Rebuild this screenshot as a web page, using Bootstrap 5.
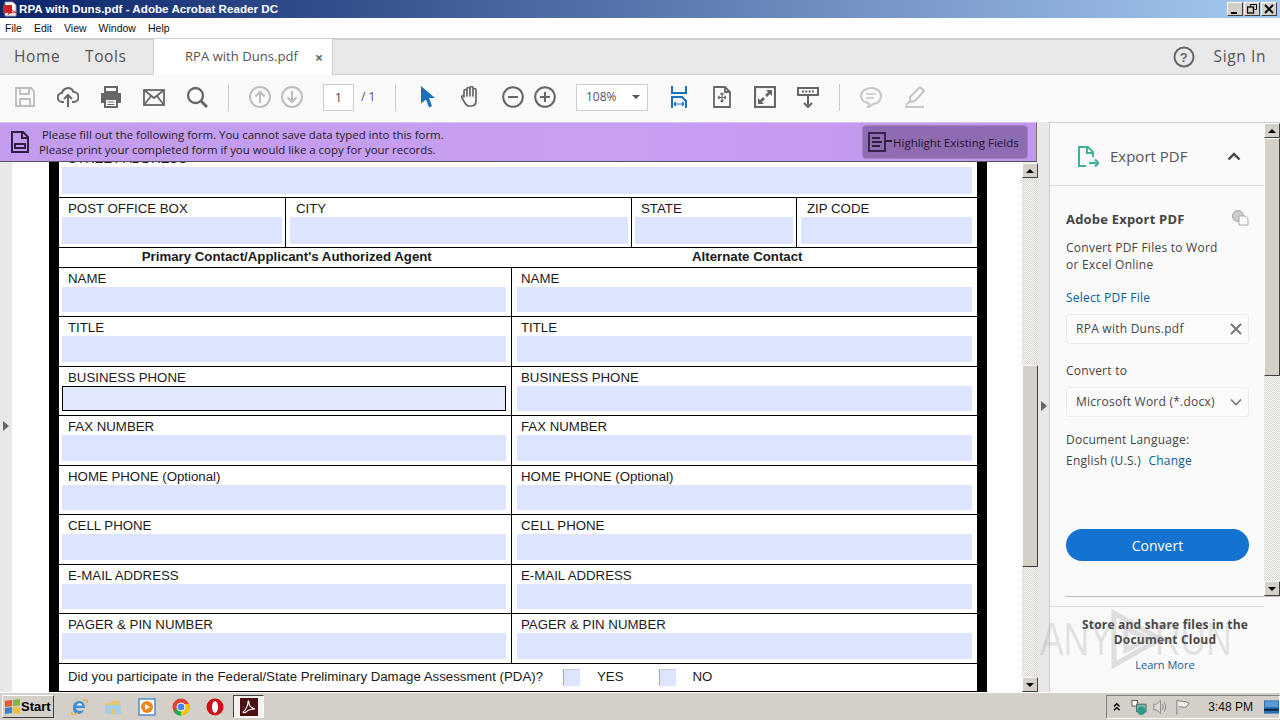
<!DOCTYPE html>
<html lang="en">
<head>
<meta charset="utf-8">
<title>RPA with Duns.pdf - Adobe Acrobat Reader DC</title>
<link href="https://cdn.jsdelivr.net/npm/bootstrap@5.3.0/dist/css/bootstrap.min.css" rel="stylesheet">
<style>
html,body{margin:0;width:1280px;height:720px;overflow:hidden;background:#d4d0c8}
.app{width:1280px;height:720px;font-family:"Open Sans","Noto Sans",sans-serif;position:relative;overflow:hidden}
.titlebar{height:18px;background:linear-gradient(90deg,#0a246a 0%,#a6caf0 100%);color:#fff;font:bold 11.65px/18px "Liberation Sans",sans-serif;padding-left:3px}
.titlebar svg{margin-right:1px}
.winbtn{width:16px;height:14px;background:#d4d0c8;border:1px solid;border-color:#fff #404040 #404040 #fff;margin-right:1px;color:#000}
.winbtns{margin-right:2px;margin-top:2px;gap:0}
.menubar{height:20px;background:#fdfdfd;font:10.5px/20px "Liberation Sans",sans-serif;color:#111;padding-left:5px;gap:12px}
.tabbar{height:37px;background:#e9e9e9;border-top:2px solid #cfcfcf;border-bottom:1px solid #cfcfcf;color:#555;font-size:15.5px;letter-spacing:.6px}
.tabbar .hm{margin-left:14px;width:71px}
.tabbar .tl{width:68px}
.doctab{width:180px;height:36px;background:#fff;border-left:1px solid #cfcfcf;border-right:1px solid #cfcfcf;font-size:13px;letter-spacing:.05px;color:#555;padding-left:31px;padding-right:9px;margin-bottom:-1px;margin-top:-1px}
.doctab b{color:#666;font-size:14px}
.signin{margin-right:14px;margin-left:19px;font-size:15.5px}
.toolbar{height:47px;background:#fafafa;padding-left:14px;padding-bottom:3px;color:#666}
.toolbar svg{width:22px;height:22px;flex:none}
.m10{margin-left:10px}.m20{margin-left:20px}.m21{margin-left:21px}
.tsep{width:1px;height:27px;background:#ccc;flex:none}
.pagebox{width:31px;height:27px;background:#fff;border:1px solid #ccc;font-size:12px;color:#444;line-height:25px;text-align:center}
.pageof{font-size:12px;color:#555;width:18px;margin-left:7px;white-space:nowrap}
.zoombox{width:72px;height:27px;background:#fff;border:1px solid #ccc;font-size:12px;color:#555;padding:0 7px 0 9px}
.caret-d{width:0;height:0;border-left:4px solid transparent;border-right:4px solid transparent;border-top:4px solid #555}
.workarea{height:570px}
.leftcol{width:1038px;flex:none;height:570px;background:#e8e8e8}
.banner{height:40px;width:1037px;background:linear-gradient(90deg,#c49cef,#c79ff3 60%,#c296ee);border-top:1px solid #d9c2ee;border-bottom:1px solid #555;border-right:1px solid #777;color:#222;font-size:11.42px;line-height:15px;padding-left:10px}
.banner .msg{margin-left:9px}
.banner .m1{padding-left:3px}
.hlbtn{width:166px;height:34px;background:#8f6cb2;border-radius:4px;margin-right:8px;margin-left:auto;color:#1d1430;font-size:11.5px;padding-left:5px;white-space:nowrap;border:1px solid #a383c4}
.docrow{height:530px}
.gut-l{width:12px;flex:none;background:#e8e8e8;height:530px;padding-top:259px;padding-left:3px}
.tri-r{width:0;height:0;border-top:5px solid transparent;border-bottom:5px solid transparent;border-left:6px solid #666}
.docview{width:1010px;flex:none;height:530px;background:#fff;overflow:hidden}
.sheet{margin-left:37px;width:938px;border-left:10px solid #000;border-right:10px solid #000;margin-top:-14px;background:#fff;color:#1a1a1a;font:13.25px/16px "Liberation Sans",sans-serif;height:560px}
.frow{border-bottom:1px solid #000;display:flex;height:49.5px}
.frow.r50{height:50px}
.frow.hd{height:19.5px;font-weight:bold;text-align:center;line-height:17px}
.frow.hd div:first-child{width:457px}
.frow.hd div:last-child{width:464px;padding-left:3px}
.fcell{padding-top:3px;border-right:1px solid #000;flex:none}
.fcell:last-child{border-right:0}
.fcell .lb{padding-left:6px;height:16px;margin-left:3px;white-space:nowrap}
.fld{height:25.5px;background:#dde4ff;margin-left:3px}
.r50 .fld{height:27px}
.c1{width:453px}.c1 .fld{margin-right:5px}
.c2{width:465px}.c2 .fld{margin-left:5px;margin-right:5px}.c2 .lb{margin-left:0;padding-left:9px}
.fld.on{border:1px solid #000;background:#e2e8ff}
.lastrow{height:28px;border-bottom:1px solid #000;padding-left:9px;line-height:26px}
.ck{width:17px;height:17px;background:#dde4ff;border-left:1px solid #aaa;border-top:1px solid #ccc;flex:none}
.vscroll{width:16px;flex:none;background-color:#e8e6e1;background-image:repeating-conic-gradient(#d4d0c8 0 25%,#fff 0 50%);background-size:2px 2px;display:flex;flex-direction:column}
.sbtn{height:15px;flex:none;background:#d4d0c8;border:1px solid;border-color:#fff #404040 #404040 #fff;display:flex;align-items:center;justify-content:center}
.up{width:0;height:0;border-left:4px solid transparent;border-right:4px solid transparent;border-bottom:4px solid #000}
.dn{width:0;height:0;border-left:4px solid transparent;border-right:4px solid transparent;border-top:4px solid #000}
.sthumb{background:#d4d0c8;border:1px solid;border-color:#fff #404040 #404040 #fff;flex:none}
.ds{height:529px;margin-top:1px}
.ds .t1{height:187px;flex:none}.ds .sthumb{height:202px}.ds .sp{flex:1}
.gut-r{width:12px;flex:none;height:570px;background:#e8e8e8;padding-top:279px;padding-left:3px;border-right:1px solid #ccc}
.rightpanel{width:230px;flex:none;height:570px;background:#fafafa;color:#444;font-size:12px;border-top:1px solid #ccc;letter-spacing:.25px}
.ptop{height:473px}
.pscroll{width:214px;flex:none}
.exphead{height:63px;border-bottom:1px solid #ddd;padding-left:27px;padding-right:23px;padding-top:5px;font-size:15px;color:#555;letter-spacing:0}
.exphead span{margin-left:11px;flex:1}
.pbody{padding:0 15px 0 16px;height:397px;border-bottom:1px solid #ddd}
.ptitle{font-weight:700;font-size:13px;color:#444;margin-top:24px;height:20px;letter-spacing:.2px}
.pl{line-height:17px}
.sel{color:#0e5c92}
.inbox{height:30px;border:1px solid #ececec;border-radius:3px;background:#fbfbfb;padding:0 6px 0 9px}
.cvt{height:32px;width:183px;border-radius:16px;background:#1473d0;color:#fff;font-size:14px;border:0;padding:0;margin-top:60px;letter-spacing:0}
.cvt:hover{background:#1473d0;color:#fff}
.ps .sthumb{height:238px}.ps .sp{flex:1}.ps{height:473px}
.pfoot{height:96px;margin-left:15px;border-top:1px solid #bbb;text-align:center;padding-top:20px;padding-right:15px;font-weight:700;line-height:15px;letter-spacing:.2px;font-size:12px;color:#444}
.pfoot .lm{font-weight:400;letter-spacing:0;margin-top:10px;color:#0e5c92;line-height:15px;font-size:11px}
.taskbar{height:28px;background:#d4d0c8;border-top:1px solid #fff;padding-left:2px}
.startb{width:52px;height:23px;background:#d4d0c8;border:1px solid;border-color:#fff #404040 #404040 #fff;font:bold 13px "Liberation Sans",sans-serif;color:#000;padding:0 0 0 1px;gap:0}
.tkicons{margin-left:16px}
.tkicons svg{width:18px;height:18px;flex:none;margin-right:16px}
.tkactive{width:31px;height:23px;border:1px solid;border-color:#404040 #fff #fff #404040;background:#f4f2ee;margin-left:-7px}
.tkactive svg{margin:0}
.tray{margin-left:auto;width:174px;height:24px;flex:none;border:1px solid;border-color:#808080 #fff #fff #808080;font:12px "Liberation Sans",sans-serif;color:#111;padding-left:6px;white-space:nowrap}
.wm{position:absolute;left:1040px;top:606px;width:200px;height:66px;pointer-events:none}
.wmt{position:absolute;top:6px;font:46px/54px "Liberation Sans",sans-serif;color:rgba(140,140,140,.22);transform-origin:left top;transform:scaleX(.77)}
</style>
</head>
<body>
<div class="app d-flex flex-column">
  <div class="titlebar d-flex align-items-start">
    <svg width="15" height="17" viewBox="0 0 15 17"><path d="M2 2h8l3 3v11H2z" fill="#fff" stroke="#999"/><rect x="0" y="5" width="9" height="8" fill="#c22"/><path d="M5 15c3-5 4-8 3-9s0 5 4 6-7 0-7 3z" fill="none" stroke="#c22"/></svg>
    <span>RPA with Duns.pdf - Adobe Acrobat Reader DC</span>
    <div class="d-flex ms-auto winbtns">
      <div class="winbtn d-flex align-items-end justify-content-center"><svg width="8" height="8" viewBox="0 0 8 8"><rect x="0" y="5" width="6" height="2" fill="#000"/></svg></div>
      <div class="winbtn d-flex align-items-center justify-content-center"><svg width="10" height="10" viewBox="0 0 10 10" fill="none" stroke="#000"><path d="M3.500 2.500v-2h6v5h-2"/><rect x=".5" y="3" width="6" height="6" stroke-width="1.300"/></svg></div>
      <div class="winbtn d-flex align-items-center justify-content-center"><svg width="10" height="10" viewBox="0 0 10 10" stroke="#000" stroke-width="1.800"><path d="M1 1l8 8M9 1l-8 8"/></svg></div>
    </div>
  </div>
  <div class="menubar d-flex"><span>File</span><span>Edit</span><span>View</span><span>Window</span><span>Help</span></div>
  <div class="tabbar d-flex align-items-center">
    <span class="hm">Home</span><span class="tl">Tools</span>
    <div class="doctab d-flex align-items-center justify-content-between"><span>RPA with Duns.pdf</span><b>×</b></div>
    <div class="ms-auto d-flex align-items-center">
      <svg width="22" height="22" viewBox="0 0 22 22"><circle cx="11" cy="11" r="9.500" fill="none" stroke="#666" stroke-width="2"/><text x="11" y="15.500" text-anchor="middle" font-size="13" font-weight="700" fill="#666" font-family="Liberation Sans">?</text></svg>
      <span class="signin">Sign In</span>
    </div>
  </div>
  <div class="toolbar d-flex align-items-center">
    <svg viewBox="0 0 22 22" fill="none" stroke="#bdbdbd" stroke-width="1.800"><path d="M2 2h15l3 3v15H2z"/><path d="M6 2v6h9V2M6 20v-7h10v7"/></svg>
    <svg class="m21" viewBox="0 0 22 22" fill="none" stroke="#666" stroke-width="2"><path d="M7 16H5.500a4.500 4.500 0 0 1-.5-9A6 6 0 0 1 16.500 6a4.800 4.800 0 0 1 0 10H15"/><path d="M11 21V9M7 13l4-4 4 4"/></svg>
    <svg class="m21" viewBox="0 0 22 22"><path d="M5 1h12v5H5z" fill="none" stroke="#666" stroke-width="2"/><path d="M1 7h20v10h-3v-3H4v3H1z" fill="#666"/><rect x="5" y="13" width="12" height="8" fill="#fff" stroke="#666" stroke-width="2"/><path d="M7.500 16h7M7.500 18.500h7" stroke="#666"/></svg>
    <svg class="m21" viewBox="0 0 22 22" fill="none" stroke="#666" stroke-width="1.800"><rect x="1" y="4" width="20" height="15"/><path d="M1 4l10 8 10-8M1 19l7-9M21 19l-7-9"/></svg>
    <svg class="m21" viewBox="0 0 22 22" fill="none" stroke="#666" stroke-width="2.300"><circle cx="9.500" cy="9.500" r="7.500"/><path d="M15 15l6 6" stroke-width="3"/></svg>
    <div class="tsep m20"></div>
    <svg class="m20" viewBox="0 0 22 22" fill="none" stroke="#bdbdbd" stroke-width="2"><circle cx="11" cy="11" r="10"/><path d="M11 17V6M6.500 10.500L11 6l4.500 4.500"/></svg>
    <svg class="m10" viewBox="0 0 22 22" fill="none" stroke="#bdbdbd" stroke-width="2"><circle cx="11" cy="11" r="10"/><path d="M11 5v11M6.500 11.500L11 16l4.500-4.500"/></svg>
    <div class="pagebox m20">1</div>
    <div class="pageof">/ 1</div>
    <div class="tsep ms-3"></div>
    <svg class="m21" viewBox="0 0 22 22"><path d="M4 0l14 12h-6l3 8-3 1.500-3-8-5 4z" fill="#1a6fc0"/></svg>
    <svg class="m20" viewBox="0 0 22 22" fill="none" stroke="#666" stroke-width="1.700" stroke-linejoin="round"><path d="M5 11V5a1.300 1.300 0 0 1 3 0v5V3a1.300 1.300 0 0 1 3 0v7-8a1.300 1.300 0 0 1 3 0v8-6a1.300 1.300 0 0 1 3 0v11c0 3-2 5-5 5h-2c-2 0-3-1-4-3l-3-5c-1-2 1-3 2-2z"/></svg>
    <svg class="m21" viewBox="0 0 22 22" fill="none" stroke="#666" stroke-width="2"><circle cx="11" cy="11" r="9.800"/><path d="M6 11h10"/></svg>
    <svg class="m10" viewBox="0 0 22 22" fill="none" stroke="#666" stroke-width="2"><circle cx="11" cy="11" r="9.800"/><path d="M6 11h10M11 6v10"/></svg>
    <div class="zoombox m20 d-flex align-items-center justify-content-between"><span>108%</span><i class="caret-d"></i></div>
    <svg class="m20" viewBox="0 0 22 22" fill="none" stroke="#1a6fc0" stroke-width="2"><path d="M4 0v7h14V0M4 22V11h10l4 4v7"/><path d="M6 18h10M6 18l2-2M6 18l2 2M16 18l-2-2M16 18l-2 2" stroke-width="1.200"/></svg>
    <svg class="m21" viewBox="0 0 22 22" fill="none" stroke="#666" stroke-width="1.800"><path d="M3 1h11l5 5v15H3zM14 1v5h5"/><path d="M11 7v9M7 11.500h8M11 7l-1.500 1.500M11 7l1.500 1.500M11 16l-1.500-1.500M11 16l1.500-1.500M7 11.500l1.500-1.500M7 11.500L8.500 13M15 11.500L13.500 10M15 11.500L13.500 13" stroke-width="1.100"/></svg>
    <svg class="m21" viewBox="0 0 22 22"><rect x="1" y="1" width="20" height="20" fill="none" stroke="#666" stroke-width="2.200"/><path d="M12 4h6v6l-2-2-3 3-2-2 3-3zM10 18H4v-6l2 2 3-3 2 2-3 3z" fill="#666"/></svg>
    <svg class="m21" viewBox="0 0 22 22" fill="none" stroke="#666" stroke-width="2"><rect x="1" y="2" width="20" height="7"/><path d="M5 5.500h12" stroke-dasharray="2 1.300"/><path d="M11 10v11M7 17l4 4 4-4"/></svg>
    <div class="tsep m20"></div>
    <svg class="m20" viewBox="0 0 22 22" fill="none" stroke="#c6c6c6" stroke-width="2"><path d="M11 2c5.500 0 10 3 10 8s-4.500 8-8 8c-1 1-3 3-5 3 1-1 1.500-2 1-3.500-4-1-8-3-8-7.500s4.500-8 10-8z"/><path d="M6 8h10M6 12h8" stroke-width="1.500"/></svg>
    <svg class="m21" viewBox="0 0 22 22" fill="none" stroke="#c6c6c6" stroke-width="2"><path d="M7 11L17 1l4 4-9 10-5 1zM7 15l-4 4M2 21h19" /></svg>
  </div>
  <div class="workarea d-flex">
    <div class="leftcol">
      <div class="banner d-flex align-items-center">
        <svg width="20" height="22" viewBox="0 0 20 22" fill="none" stroke="#2c2140" stroke-width="2"><path d="M2 1h11l5 5v15H2zM12 1v6h6"/><rect x="5" y="13" width="10" height="4"/></svg>
        <div class="msg"><div class="m1">Please fill out the following form. You cannot save data typed into this form.</div><div>Please print your completed form if you would like a copy for your records.</div></div>
        <div class="hlbtn d-flex align-items-center">
          <svg width="25" height="22" viewBox="0 0 25 22" fill="none" stroke="#2c2140" stroke-width="1.800"><rect x="1" y="2" width="16" height="18"/><path d="M4 7h8M4 11h10M4 15h8M17 10h7"/></svg>
          <span>Highlight Existing Fields</span>
        </div>
      </div>
      <div class="docrow d-flex">
        <div class="gut-l"><div class="tri-r"></div></div>
        <div class="docview">
          <div class="sheet">
            <div class="frow r50"><div class="fcell" style="width:100%"><div class="lb">STREET ADDRESS</div><div class="fld" style="margin-right:5px"></div></div></div>
            <div class="frow r50">
              <div class="fcell" style="width:227px"><div class="lb">POST OFFICE BOX</div><div class="fld" style="margin-right:3px"></div></div>
              <div class="fcell" style="width:346px"><div class="lb" style="margin-left:4px">CITY</div><div class="fld" style="margin-left:4px;margin-right:3px"></div></div>
              <div class="fcell" style="width:165px"><div class="lb">STATE</div><div class="fld" style="margin-right:3px"></div></div>
              <div class="fcell" style="width:180px"><div class="lb" style="margin-left:4px">ZIP CODE</div><div class="fld" style="margin-left:4px;margin-right:5px"></div></div>
            </div>
            <div class="frow hd"><div>Primary Contact/Applicant's Authorized Agent</div><div>Alternate Contact</div></div>
            <div class="frow"><div class="fcell c1"><div class="lb">NAME</div><div class="fld"></div></div><div class="fcell c2"><div class="lb">NAME</div><div class="fld"></div></div></div>
            <div class="frow"><div class="fcell c1"><div class="lb">TITLE</div><div class="fld"></div></div><div class="fcell c2"><div class="lb">TITLE</div><div class="fld"></div></div></div>
            <div class="frow"><div class="fcell c1"><div class="lb">BUSINESS PHONE</div><div class="fld on"></div></div><div class="fcell c2"><div class="lb">BUSINESS PHONE</div><div class="fld"></div></div></div>
            <div class="frow"><div class="fcell c1"><div class="lb">FAX NUMBER</div><div class="fld"></div></div><div class="fcell c2"><div class="lb">FAX NUMBER</div><div class="fld"></div></div></div>
            <div class="frow"><div class="fcell c1"><div class="lb">HOME PHONE (Optional)</div><div class="fld"></div></div><div class="fcell c2"><div class="lb">HOME PHONE (Optional)</div><div class="fld"></div></div></div>
            <div class="frow"><div class="fcell c1"><div class="lb">CELL PHONE</div><div class="fld"></div></div><div class="fcell c2"><div class="lb">CELL PHONE</div><div class="fld"></div></div></div>
            <div class="frow"><div class="fcell c1"><div class="lb">E-MAIL ADDRESS</div><div class="fld"></div></div><div class="fcell c2"><div class="lb">E-MAIL ADDRESS</div><div class="fld"></div></div></div>
            <div class="frow"><div class="fcell c1"><div class="lb">PAGER &amp; PIN NUMBER</div><div class="fld"></div></div><div class="fcell c2"><div class="lb">PAGER &amp; PIN NUMBER</div><div class="fld"></div></div></div>
            <div class="lastrow d-flex align-items-center">
              <span>Did you participate in the Federal/State Preliminary Damage Assessment (PDA)?</span>
              <i class="ck" style="margin-left:20px"></i><span style="margin-left:17px">YES</span><i class="ck" style="margin-left:35px"></i><span style="margin-left:17px">NO</span>
            </div>
          </div>
        </div>
        <div class="vscroll ds">
          <div class="sbtn"><i class="up"></i></div><div class="t1"></div><div class="sthumb"></div><div class="sp"></div><div class="sbtn"><i class="dn"></i></div>
        </div>
      </div>
    </div>
    <div class="gut-r"><div class="tri-r"></div></div>
    <div class="rightpanel">
      <div class="ptop d-flex">
        <div class="pscroll">
          <div class="exphead d-flex align-items-center">
            <svg width="22" height="22" viewBox="0 0 22 22" fill="none" stroke="#3fb39a" stroke-width="2"><path d="M9 20H2V1h9l5 5v5M10 1v6h6"/><path d="M12 17h9M18 13.500l3.500 3.500-3.500 3.500" stroke-width="2.200"/></svg>
            <span>Export PDF</span>
            <svg width="14" height="9" viewBox="0 0 14 9" fill="none" stroke="#444" stroke-width="2.400"><path d="M1.500 7.500L7 2l5.500 5.500"/></svg>
          </div>
          <div class="pbody">
            <div class="ptitle d-flex justify-content-between"><span>Adobe Export PDF</span>
              <svg width="18" height="16" viewBox="0 0 18 16" fill="none" stroke="#aaa"><circle cx="7" cy="6" r="5.500" fill="#ccc"/><path d="M8 6h6l3 3v6H8z" fill="#fafafa"/></svg></div>
            <div class="pl" style="margin-top:9px">Convert PDF Files to Word</div>
            <div class="pl">or Excel Online</div>
            <div class="pl sel" style="margin-top:16px">Select PDF File</div>
            <div class="inbox d-flex align-items-center justify-content-between mt-2"><span>RPA with Duns.pdf</span>
              <svg width="12" height="12" viewBox="0 0 12 12" stroke="#777" stroke-width="2"><path d="M1 1l10 10M11 1L1 11"/></svg></div>
            <div class="pl" style="margin-top:18px">Convert to</div>
            <div class="inbox d-flex align-items-center justify-content-between" style="margin-top:8px"><span class="text-nowrap">Microsoft Word (*.docx)</span>
              <svg width="12" height="8" viewBox="0 0 12 8" fill="none" stroke="#777" stroke-width="1.600"><path d="M1 1.500l5 5 5-5"/></svg></div>
            <div class="pl" style="margin-top:14px">Document Language:</div>
            <div class="pl" style="margin-top:4px">English (U.S.) <span class="sel ms-1">Change</span></div>
            <button class="btn cvt d-block" type="button">Convert</button>
          </div>
        </div>
        <div class="vscroll ps"><div class="sbtn"><i class="up"></i></div><div class="sthumb"></div><div class="sp"></div><div class="sbtn"><i class="dn"></i></div></div>
      </div>
      <div class="pfoot">
        <div>Store and share files in the</div><div>Document Cloud</div>
        <div class="lm">Learn More</div>
      </div>
    </div>
  </div>
  <div class="taskbar d-flex align-items-center">
    <button class="startb d-flex align-items-center" type="button">
      <svg width="17" height="15" viewBox="0 0 17 15"><path d="M1 2l7-1v6L1 8z" fill="#e2592a"/><path d="M9 1l7-1v6.500L9 7z" fill="#7cb63a"/><path d="M1 9l7-1v6l-7 1z" fill="#3a7fd0"/><path d="M9 8l7 .5V15l-7-1z" fill="#eec22d"/></svg>Start</button>
    <div class="tkicons d-flex align-items-center">
      <svg viewBox="0 0 18 18"><path d="M3 10c0-5 3-7 6.500-7S15 6 15 10H6c0 3 4 4 8 2-1 3-4 4-6 4-3 0-5-2-5-6z" fill="#3d8fd6"/><path d="M7 7.500h5c0-3-5-3-5 0z" fill="#fff"/><path d="M2 14c-2 3 2 3 6 1M13 3c3-2 5-1 4 2" fill="none" stroke="#e5b63b" stroke-width="1.500"/></svg>
      <svg viewBox="0 0 18 18"><path d="M1 5h6l1-2h8v13H1z" fill="#e8c66a"/><rect x="1" y="7" width="16" height="9" fill="#a3d0e8"/><rect x="7" y="11" width="4" height="5" fill="#e8c66a"/></svg>
      <svg viewBox="0 0 18 18"><rect x="1" y="1" width="16" height="16" fill="#fff" stroke="#4f8fd0" stroke-width="1.500"/><circle cx="9" cy="9" r="6" fill="#ee8a1d"/><path d="M7 6l5 3-5 3z" fill="#fff"/></svg>
      <svg viewBox="0 0 18 18"><circle cx="9" cy="9" r="8.500" fill="#dc4437"/><path d="M9 9L1.500 13A8.500 8.500 0 0 0 9 17.500z" fill="#2fa34f"/><path d="M9 9v8.500A8.500 8.500 0 0 0 17 6H9z" fill="#f7c300"/><circle cx="9" cy="9" r="4" fill="#4285f4" stroke="#fff"/></svg>
      <svg viewBox="0 0 18 18"><circle cx="9" cy="9" r="8.500" fill="#cc1017"/><ellipse cx="9" cy="9" rx="3" ry="6" fill="#fff"/></svg>
      <div class="tkactive d-flex align-items-center justify-content-center"><svg viewBox="0 0 18 18"><rect width="18" height="18" fill="#4a1012"/><path d="M3 14c3-2 5-7 5-10 0-2 1-1 1 1 0 3 2 5 6 6-4 0-7 1-9 3-1 1-3 1-3 0z" fill="none" stroke="#fff" stroke-width="1.100"/></svg></div>
    </div>
    <div class="tray d-flex align-items-center">
      <svg width="8" height="10" viewBox="0 0 8 10" fill="none" stroke="#000" stroke-width="1.400"><path d="M1 4.500L4 1.500l3 3M1 8.500l3-3 3 3"/></svg>
      <svg width="18" height="18" viewBox="0 0 18 18" style="margin-left:10px"><rect x="1" y="2" width="6" height="6" fill="#fff" stroke="#555"/><rect x="6" y="6" width="10" height="8" fill="#7fb8a8" stroke="#466"/><circle cx="11" cy="13" r="4.500" fill="#2e9a8a"/></svg>
      <svg width="18" height="18" viewBox="0 0 18 18" fill="none" stroke="#888" style="margin-left:5px"><path d="M2 6h3l4-4v14l-4-4H2z" fill="#ddd"/><path d="M11 6c1 2 1 4 0 6M13 4c2 3 2 7 0 10"/></svg>
      <svg width="18" height="18" viewBox="0 0 18 18" fill="none" stroke="#777" style="margin-left:6px"><path d="M2 17V2h2M4 3c3-1 4 1 7 0l4 2-3 4c-3 1-5-1-8 0" fill="#eee"/></svg>
      <span style="margin-left:16px">3:48 PM</span>
      <svg width="16" height="14" viewBox="0 0 16 14" style="margin-left:11px"><rect width="16" height="14" fill="#2b6fb8"/><rect y="9" width="16" height="2" fill="#123"/><rect x="1" y="1" width="14" height="6" fill="#5c9ad8"/></svg>
    </div>
  </div>
  <div class="wm">
    <span class="wmt" style="left:0">ANY</span>
    <svg style="position:absolute;left:66px;top:2px" width="60" height="62" viewBox="0 0 60 62" fill="none" stroke="rgba(140,140,140,.25)" stroke-width="5"><path d="M8 5l46 26-46 26z"/><path d="M20 20l22 11-22 11z"/></svg>
    <span class="wmt" style="left:115px">RUN</span>
  </div>
</div>
</body>
</html>
